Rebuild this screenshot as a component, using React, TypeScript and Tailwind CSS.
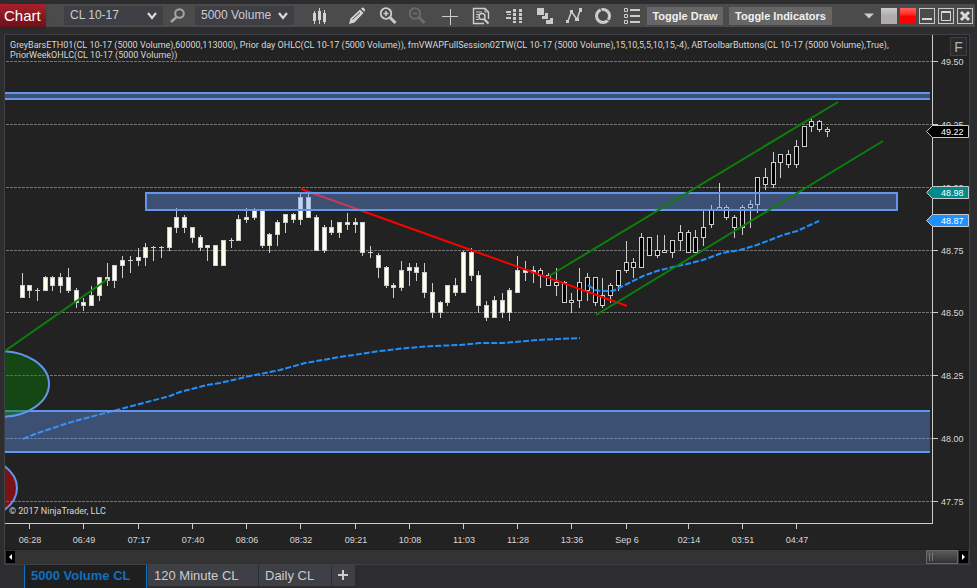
import { useState } from "react";
import type { ReactNode } from "react";

// [x, high, body top, body bottom, low] in chart units
type Candle = [number, number, number, number, number];

const overnightCandles: Candle[] = [
    [22, 273, 285, 298, 298], [29, 285, 285, 291, 298], [37, 288, 290, 291, 301], [45, 276, 277, 291, 291],
    [52, 276, 277, 286, 291], [60, 273, 277, 286, 293], [68, 268, 277, 291, 293], [76, 288, 290, 303, 308],
    [83, 298, 302, 306, 311], [91, 286, 295, 306, 306], [99, 277, 277, 296, 301], [107, 263, 277, 281, 286],
    [114, 265, 265, 281, 288], [122, 256, 260, 266, 278], [130, 256, 260, 261, 273], [138, 248, 257, 261, 266],
    [145, 243, 247, 258, 266], [153, 246, 247, 248, 261], [161, 246, 247, 248, 258], [169, 227, 227, 248, 251],
    [176, 208, 217, 228, 233], [184, 215, 217, 228, 233], [192, 227, 227, 238, 243], [200, 235, 237, 248, 251],
    [207, 245, 245, 248, 261], [215, 245, 245, 266, 266], [223, 240, 240, 266, 266], [231, 238, 240, 241, 248],
    [238, 215, 219, 241, 241], [246, 208, 217, 220, 223], [254, 208, 210, 218, 220], [262, 210, 210, 246, 248],
    [269, 233, 234, 246, 253], [277, 220, 222, 235, 246], [285, 214, 214, 223, 233], [293, 213, 214, 220, 223],
    [300, 194, 197, 220, 225], [308, 194, 197, 218, 218], [316, 215, 217, 251, 251], [324, 225, 227, 251, 253],
    [331, 220, 227, 233, 235], [339, 222, 222, 233, 238], [347, 213, 222, 225, 230], [355, 218, 222, 225, 233],
    [362, 222, 222, 253, 256], [370, 246, 252, 253, 258], [378, 253, 255, 268, 278], [386, 266, 267, 286, 288],
    [393, 283, 285, 288, 298], [401, 261, 270, 288, 291], [409, 263, 267, 271, 286], [416, 263, 267, 273, 281],
    [424, 263, 272, 293, 298], [432, 283, 292, 313, 318], [440, 301, 302, 313, 318], [447, 285, 285, 303, 306],
    [455, 278, 285, 293, 296], [463, 251, 252, 293, 293], [471, 248, 252, 276, 281], [478, 271, 275, 306, 313],
    [486, 301, 305, 318, 321], [494, 296, 300, 318, 318], [502, 293, 300, 313, 318], [509, 288, 290, 313, 321],
    [517, 256, 270, 293, 293], [525, 261, 270, 273, 281], [533, 266, 270, 273, 283],
];

const sessionCandles: Candle[] = [
    [540, 268, 270, 276, 288], [548, 273, 275, 286, 286], [556, 268, 282, 286, 296], [564, 281, 282, 303, 303],
    [571, 293, 300, 303, 313], [579, 268, 282, 301, 308], [587, 273, 277, 291, 301], [595, 277, 277, 303, 306],
    [602, 278, 295, 306, 308], [610, 283, 285, 296, 303], [618, 270, 270, 286, 291], [626, 241, 262, 271, 273],
    [633, 258, 262, 268, 278], [641, 233, 237, 268, 268], [649, 237, 237, 256, 256], [657, 235, 250, 256, 258],
    [664, 235, 250, 253, 253], [672, 240, 240, 253, 258], [680, 225, 232, 241, 251], [688, 230, 232, 253, 253],
    [695, 230, 237, 253, 253], [703, 210, 227, 238, 246], [711, 205, 210, 225, 228], [719, 183, 207, 210, 210],
    [726, 205, 207, 218, 220], [734, 215, 217, 228, 238], [742, 205, 207, 228, 235], [750, 200, 204, 208, 228],
    [757, 177, 177, 205, 213], [765, 168, 177, 185, 190], [773, 152, 162, 185, 188], [780, 154, 154, 163, 178],
    [788, 150, 154, 165, 168], [796, 140, 146, 165, 168], [804, 126, 126, 147, 147], [811, 119, 121, 127, 132],
    [819, 120, 121, 130, 132], [827, 127, 129, 132, 137],
];

const priceTicks = [
    { y: 61, label: "49.50" },
    { y: 124, label: "49.25" },
    { y: 187, label: "49.00" },
    { y: 250, label: "48.75" },
    { y: 312, label: "48.50" },
    { y: 375, label: "48.25" },
    { y: 438, label: "48.00" },
    { y: 501, label: "47.75" },
];

const timeTicks = [
    { x: 29, label: "06:28" },
    { x: 83, label: "06:49" },
    { x: 138, label: "07:17" },
    { x: 192, label: "07:40" },
    { x: 246, label: "08:06" },
    { x: 300, label: "08:32" },
    { x: 355, label: "09:21" },
    { x: 409, label: "10:08" },
    { x: 463, label: "11:03" },
    { x: 517, label: "11:28" },
    { x: 571, label: "13:36" },
    { x: 626, label: "Sep 6" },
    { x: 688, label: "02:14" },
    { x: 742, label: "03:51" },
    { x: 796, label: "04:47" },
];

const priceMarkers = [
    { y: 125, label: "49.22", fill: "#000000" },
    { y: 186, label: "48.98", fill: "#008b8b" },
    { y: 214, label: "48.87", fill: "#1e90ff" },
];

const vwapPrior =
    "23,439 35,434 50,429 68,423 90,417 117,410 147,402 170,396 180,392 207,385 220,383 250,376 280,370 305,363 340,357 380,351 407,348 433,346 460,345 480,343 503,343 537,340 558,339 580,338";
const vwapToday =
    "588,285 595,290 601,291 613,291 627,284 643,276 657,271 673,267 687,264 703,260 722,253 740,250 757,245 783,235 797,231 819,221";

const Candles = ({ data, fill }: { data: Candle[]; fill: string }) => (
    <g shapeRendering="crispEdges">
        {data.map(([x, high, top, bottom, low]) => (
            <g key={x}>
                <rect x={x} y={high} width="1" height={low - high} fill="#cccccc" />
                <rect x={x - 2} y={top} width="5" height={bottom - top} fill="#cccccc" />
                {bottom - top > 2 && (
                    <rect x={x - 1} y={top + 1} width="3" height={bottom - top - 2} fill={fill} />
                )}
            </g>
        ))}
    </g>
);

// Zone between two prices; open zones run off the left side and have no side borders
const Zone = ({ x1, x2, y1, y2, closed }: { x1: number; x2: number; y1: number; y2: number; closed?: boolean }) => (
    <g shapeRendering="crispEdges">
        <rect x={x1} y={y1} width={x2 - x1} height={y2 - y1} fill="#6495ed" fillOpacity="0.4" />
        {closed ? (
            <rect x={x1} y={y1} width={x2 - x1} height={y2 - y1} fill="none" stroke="#6495ed" strokeWidth="2" />
        ) : (
            <path d={`M${x1} ${y1}H${x2}M${x1} ${y2}H${x2}`} stroke="#6495ed" strokeWidth="2" />
        )}
    </g>
);

const PriceChart = () => (
    <svg viewBox="5 35 964 514" className="block w-full h-auto bg-[#222222] text-[9px]" role="img" aria-label="CL 10-17 price chart">
        <g shapeRendering="crispEdges" stroke="#747474" strokeDasharray="3 1">
            {priceTicks.map(({ y }) => (
                <line key={y} x1="6" x2="932" y1={y + 0.5} y2={y + 0.5} />
            ))}
        </g>

        <Candles data={overnightCandles} fill="#fffff0" />
        <Candles data={sessionCandles} fill="#000000" />

        <g fill="none" stroke="#1e90ff" strokeWidth="2" strokeDasharray="6 2">
            <polyline points={vwapPrior} />
            <polyline points={vwapToday} />
        </g>
        <line x1="301" y1="189" x2="627" y2="306" stroke="#ff0000" strokeWidth="2" />

        <Zone x1={5} x2={930} y1={93} y2={99} />
        <Zone x1={146} x2={897} y1={193} y2={210} closed />
        <Zone x1={5} x2={930} y1={411} y2={452} />

        <g stroke="#6495ed" strokeWidth="2" fillOpacity="0.4">
            <ellipse cx="0" cy="384" rx="49" ry="33" fill="#008000" />
            <ellipse cx="-33" cy="488" rx="50" ry="33" fill="#ff0000" />
        </g>

        <g stroke="#0a800a" strokeWidth="2">
            <line x1="5" y1="351" x2="108" y2="279" />
            <line x1="549" y1="276" x2="838" y2="102" />
            <line x1="596" y1="315" x2="883" y2="141" />
        </g>

        <g shapeRendering="crispEdges" fill="#cccccc">
            <rect x="932" y="35" width="1" height="489" />
            <rect x="5" y="523" width="928" height="1" />
            {priceTicks.map(({ y }) => (
                <rect key={y} x="933" y={y} width="5" height="1" />
            ))}
            {timeTicks.map(({ x }) => (
                <rect key={x} x={x} y="524" width="1" height="5" />
            ))}
        </g>

        <g fill="#d8d8d8">
            {priceTicks.map(({ y, label }) => (
                <text key={label} x="941" y={y + 4}>{label}</text>
            ))}
            <g textAnchor="middle">
                {timeTicks.map(({ x, label }) => (
                    <text key={label} x={x + 1} y="543">{label}</text>
                ))}
            </g>
            <text x="9" y="514" className="font-[Roboto,sans-serif]">© 2017 NinjaTrader, LLC</text>
        </g>

        {priceMarkers.map(({ y, label, fill }) => (
            <g key={label}>
                <path
                    d={`M926.5 ${y + 6.5}L932.5 ${y + 0.5}H968.5V${y + 12.5}H932.5Z`}
                    fill={fill}
                    stroke="#c8c8c8"
                />
                <text x="941" y={y + 10} fill="#ffffff">{label}</text>
            </g>
        ))}
    </svg>
);

const InstrumentSelect = ({ label, options }: { label: string; options: string[] }) => (
    <div className="relative w-[99px] h-[19px]">
        <select
            aria-label={label}
            className="block w-full h-full pl-1.5 appearance-none bg-[#3f3f46] text-[12px] leading-[19px] text-[#cccccc] focus:outline-none"
        >
            {options.map(option => (
                <option key={option}>{option}</option>
            ))}
        </select>
        <svg viewBox="0 0 10 8" className="absolute right-1.5 top-1.5 w-[10px] h-2 pointer-events-none">
            <path d="M1 1L5 6L9 1" fill="none" stroke="#d8d8d8" strokeWidth="2.2" />
        </svg>
    </div>
);

interface Tool {
    name: string;
    className: string;
    icon: ReactNode;
}

// Every icon is drawn on an 18 x 18 grid
const tools: Tool[] = [
    {
        name: "Chart style",
        className: "",
        icon: (
            <path
                d="M3 6h3v8h-3zM4 4h1v13h-1zM8 4h3v9h-3zM9 1h1v16h-1zM13 6h3v9h-3zM14 3h1v14h-1z"
                fill="#d4d4d4"
                shapeRendering="crispEdges"
            />
        ),
    },
    {
        name: "Drawing tools",
        className: "ml-[9px]",
        icon: (
            <>
                <path d="M1 17L2.500 11.500L12 2.500L15.500 6L6.500 15.500Z" fill="#d4d4d4" />
                <path d="M13 1.500L14 .8Q15 .3 16 1.200L16.800 2.200Q17.500 3.200 16.800 4L16.200 4.800Z" fill="#d4d4d4" />
                <path d="M4.500 12.500L12 5.500" stroke="#4b4b4b" strokeWidth="1" />
            </>
        ),
    },
    {
        name: "Zoom in",
        className: "ml-0.5",
        icon: (
            <g fill="none" stroke="#cccccc">
                <circle cx="7" cy="6.500" r="5.300" strokeWidth="1.800" />
                <path d="M4.500 6.500h5M7 4v5" strokeWidth="1.600" />
                <path d="M11 10.500L16.500 16" strokeWidth="3" />
            </g>
        ),
    },
    {
        name: "Zoom out",
        className: "",
        icon: (
            <g fill="none" stroke="#6b6b6b">
                <circle cx="7" cy="6.500" r="5.300" strokeWidth="1.800" />
                <path d="M4.500 6.500h5" strokeWidth="1.600" />
                <path d="M11 10.500L16.500 16" strokeWidth="3" />
            </g>
        ),
    },
    {
        name: "Crosshair",
        className: "ml-1",
        icon: <path d="M1 9.500h16M9.500 2v16" stroke="#cccccc" fill="none" />,
    },
    {
        name: "Data box",
        className: "ml-0.5",
        icon: (
            <g fill="none" stroke="#cccccc">
                <path d="M12 16.500H1.500V1.500H13L16.500 5V12" strokeWidth="1.400" />
                <path d="M13 1.500V5H16.500" />
                <path d="M4 5h6M4 7.500h3M4 10h2M4 12.500h3" />
                <circle cx="10" cy="9.500" r="3" strokeWidth="1.500" />
                <path d="M12 12L16.500 16.500" strokeWidth="2.200" />
            </g>
        ),
    },
    {
        name: "Market data",
        className: "ml-1",
        icon: (
            <path
                d="M1 4h5v2h-5zM1 10h5v2h-5zM2 7h4v1h-4zM8 2h3v3h-3zM8 6h3v3h-3zM8 10h3v3h-3zM8 14h3v2h-3zM14 2h3v3h-3zM14 6h3v3h-3zM14 10h3v3h-3zM14 14h3v2h-3z"
                fill="#cccccc"
            />
        ),
    },
    {
        name: "Strategies",
        className: "ml-0.5",
        icon: (
            <path
                d="M1 1h7v7h-7zM9 6h3v6h-6v-3h3zM14 11h3v6h-7v-4h4z"
                fill="#cccccc"
            />
        ),
    },
    {
        name: "Indicators",
        className: "",
        icon: (
            <>
                <path d="M3 14L6.500 4.500L12 12.500L15 3.500" fill="none" stroke="#cccccc" strokeWidth="1.500" />
                <path d="M1 13h3v3h-3zM5 3h3v3h-3zM10 11h4v3h-4zM14 1h3v4h-3z" fill="#cccccc" />
            </>
        ),
    },
    {
        name: "Reload",
        className: "",
        icon: (
            <g fill="none">
                <circle cx="9" cy="9" r="6.500" stroke="#cccccc" strokeWidth="3" />
                <path d="M6 0L8 5M12 12L16.500 14.500" stroke="#4b4b4b" strokeWidth="1" />
            </g>
        ),
    },
    {
        name: "Properties",
        className: "",
        icon: (
            <g fill="none" stroke="#cccccc">
                <path d="M1.500 1.500h3v3h-3zM1.500 7.500h3v3h-3zM1.500 13.500h3v3h-3z" />
                <path d="M7 3h10M7 9h10M7 15h10" strokeWidth="2" />
            </g>
        ),
    },
];

const WindowButton = ({ name, children }: { name: string; children: ReactNode }) => (
    <button type="button" aria-label={name} className="w-4 h-4 shrink-0">
        <svg viewBox="0 0 16 16" className="block w-full h-full" fill="none">
            <rect x="0.500" y="0.500" width="15" height="15" stroke="#c8c8c8" />
            {children}
        </svg>
    </button>
);

const Toolbar = () => (
    <header className="mt-1 mr-0.5 h-[23px] flex items-center bg-[#4b4b4b]">
        <h1 className="w-[46px] h-full pl-1 bg-linear-to-b from-[#a8202a] to-[#6c1119] text-white text-[15px] leading-[23px] shadow-md">
            Chart
        </h1>
        <div className="ml-[18px] flex items-center">
            <InstrumentSelect label="Instrument" options={["CL 10-17"]} />
            <button type="button" aria-label="Search instrument" className="mx-1.5 w-5 h-4">
                <svg viewBox="0 0 20 16" className="block w-full h-full" fill="none" stroke="#a5a5a5">
                    <circle cx="10.500" cy="5.500" r="4.300" strokeWidth="2" />
                    <path d="M7.500 9L2 14" strokeWidth="2.500" />
                </svg>
            </button>
            <InstrumentSelect label="Interval" options={["5000 Volume"]} />
        </div>

        <div className="ml-4 flex items-center gap-[11px]">
            {tools.map(({ name, className, icon }) => (
                <button key={name} type="button" aria-label={name} className={className}>
                    <svg viewBox="0 0 18 18" className="block w-[18px] h-[18px]">{icon}</svg>
                </button>
            ))}
        </div>

        <div className="ml-1.5 flex gap-1.5 text-[11px] font-bold leading-[18px] text-[#f1f1f1]">
            <button type="button" className="w-[76px] bg-[#666666] whitespace-nowrap">Toggle Draw</button>
            <button type="button" className="w-[103px] bg-[#666666] whitespace-nowrap">Toggle Indicators</button>
        </div>

        <div className="ml-auto mr-0.5 flex items-center gap-[3px]">
            <button type="button" aria-label="Link menu" className="mr-1 w-[10px] h-4">
                <svg viewBox="0 0 10 16" className="block w-full h-full">
                    <path d="M0 5.500H10L5 10.500Z" fill="#cccccc" />
                </svg>
            </button>
            <button type="button" aria-label="Instrument link" className="w-4 h-4 bg-linear-to-b from-[#cccaca] via-[#b0acac] to-[#b0acac]" />
            <button type="button" aria-label="Interval link" className="w-4 h-4 bg-linear-to-b from-[#ff6060] via-[#ff0000] to-[#ff0000]" />
            <WindowButton name="Minimize">
                <path d="M3 11h10" stroke="#d8d8d8" strokeWidth="2" />
            </WindowButton>
            <WindowButton name="Maximize">
                <path d="M3.500 3.500h9v9h-9zM3 4.500h10" stroke="#d8d8d8" />
            </WindowButton>
            <WindowButton name="Close">
                <path d="M4 4L12 12M12 4L4 12" stroke="#d8d8d8" strokeWidth="3" />
            </WindowButton>
        </div>
    </header>
);

const ScrollBar = () => (
    <div className="h-[15px] px-px flex items-center bg-[#333333] border-t border-[#1c1c1c]">
        <button type="button" aria-label="Scroll left" className="w-[9px] h-3 bg-black">
            <svg viewBox="0 0 9 12" className="block w-full h-full">
                <path d="M6 3V9L3 6Z" fill="#ffffff" />
            </svg>
        </button>
        <button
            type="button"
            aria-label="Scroll position"
            className="ml-auto mr-px w-8 h-[14px] pl-0.5 flex items-center gap-0.5 border border-[#686868] bg-linear-to-b from-[#5a5a5a] to-[#333333]"
        >
            <span className="w-px h-2 bg-[#777777]" />
            <span className="w-px h-2 bg-[#777777]" />
        </button>
        <button type="button" aria-label="Scroll right" className="w-[9px] h-3 bg-black">
            <svg viewBox="0 0 9 12" className="block w-full h-full">
                <path d="M3 3V9L6 6Z" fill="#ffffff" />
            </svg>
        </button>
    </div>
);

const tabs = [
    { name: "5000 Volume CL", width: "w-[123px]" },
    { name: "120 Minute CL", width: "w-[110px]" },
    { name: "Daily CL", width: "w-[72px]" },
];

const App = () => {
    const [activeTab, setActiveTab] = useState("5000 Volume CL");

    return (
        <div className="min-h-screen flex flex-col bg-[#2d2d30] font-['Liberation_Sans',Arial,sans-serif] overflow-hidden">
            <Toolbar />

            <main className="relative mt-[7px] ml-1 mr-[7px] border border-[#3f3f46]">
                <PriceChart />
                <p className="absolute left-[5px] top-[5px] right-10 font-[Roboto,sans-serif] text-[9px] leading-[10px] text-[#d8d8d8]">
                    GreyBarsETH01(CL 10-17 (5000 Volume),60000,113000), Prior day OHLC(CL 10-17 (5000 Volume)), fmVWAPFullSession02TW(CL 10-17 (5000 Volume),15,10,5,5,10,15,-4), ABToolbarButtons(CL 10-17 (5000 Volume),True),
                    <br />
                    PriorWeekOHLC(CL 10-17 (5000 Volume))
                </p>
                <button
                    type="button"
                    className="absolute right-0.5 top-0.5 w-[17px] h-[19px] border border-[#3f3f46] bg-[#2a2a2c] text-[14px] leading-[18px] text-[#b4b4b4]"
                >
                    F
                </button>
                <ScrollBar />
            </main>

            <nav className="ml-6 flex items-start gap-px text-[13px] leading-[21px] text-[#cccccc]">
                {tabs.map(({ name, width }) => (
                    <button
                        key={name}
                        type="button"
                        onClick={() => setActiveTab(name)}
                        className={`${width} text-left whitespace-nowrap ${
                            name === activeTab
                                ? "h-[23px] pl-1.5 pb-0.5 border-x border-[#0e70c0] bg-[#1f1f1f] font-bold text-[#0e70c0]"
                                : "h-[21px] pl-1.5 bg-[#3f3f46]"
                        }`}
                    >
                        {name}
                    </button>
                ))}
                <button type="button" aria-label="Add tab" className="w-[23px] h-[21px] bg-[#3f3f46]">
                    <svg viewBox="0 0 23 21" className="block w-full h-full">
                        <path d="M6 10h10M11 5v10" stroke="#cccccc" strokeWidth="2" />
                    </svg>
                </button>
            </nav>
        </div>
    );
};

export default App;
